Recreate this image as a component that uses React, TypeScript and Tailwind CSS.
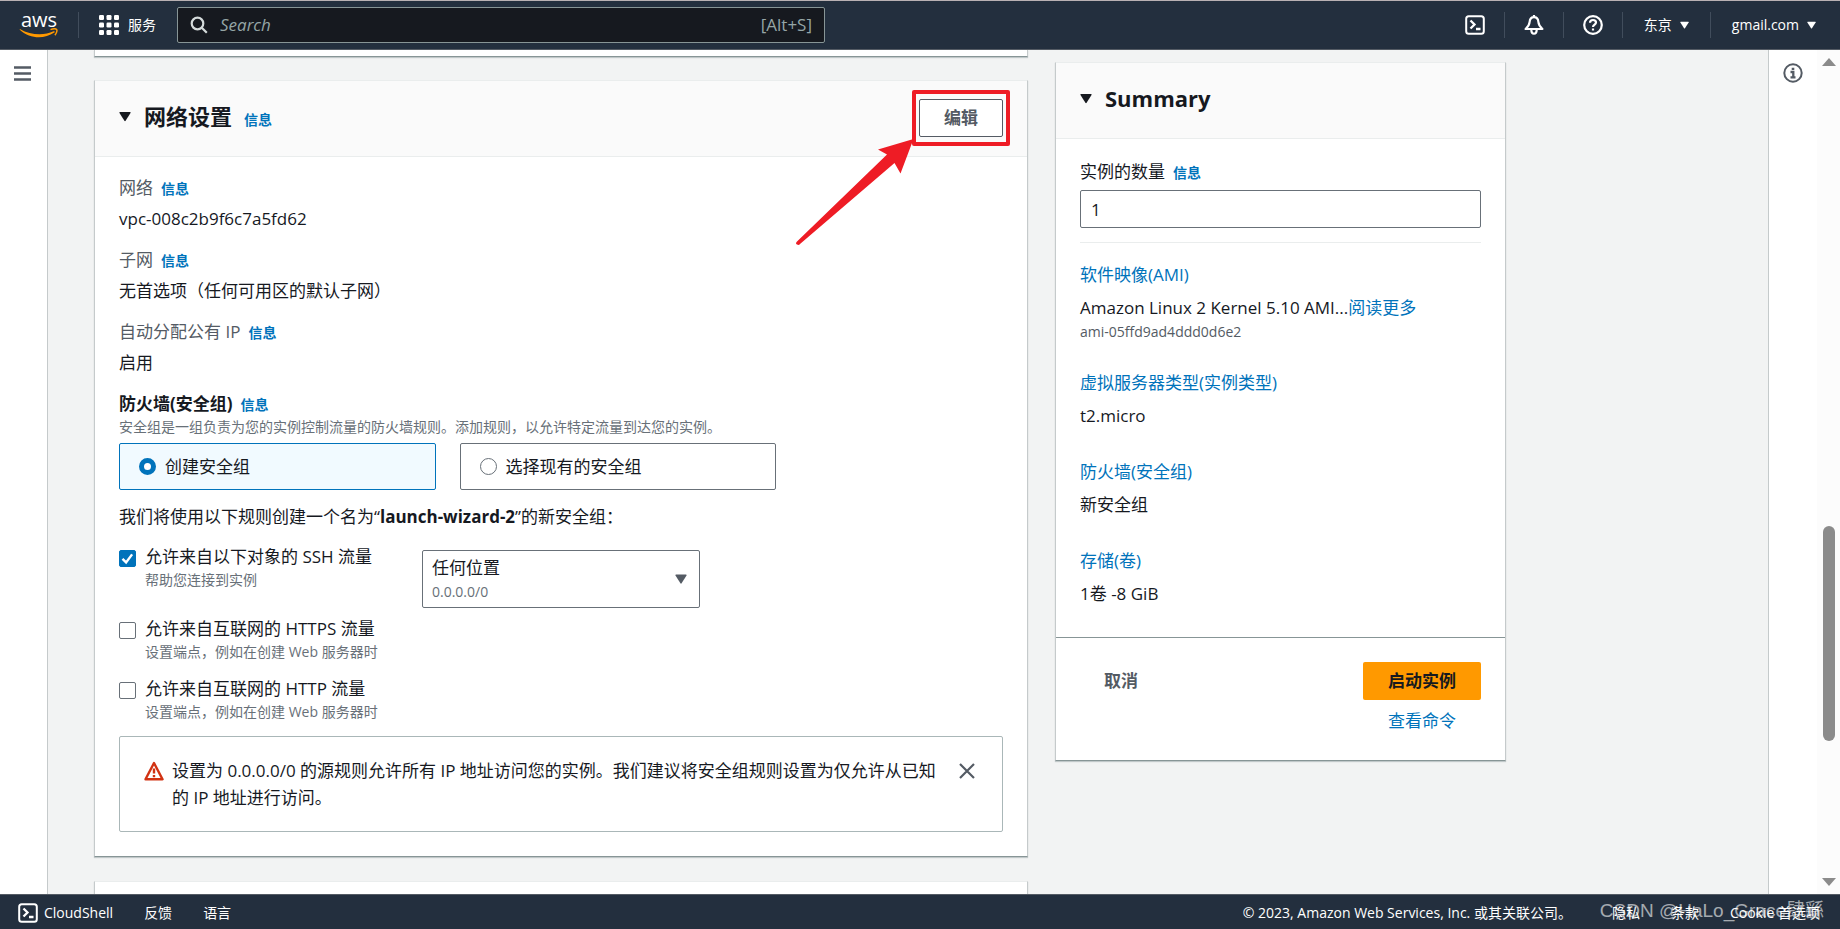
import { useState } from 'react';
import type { ReactNode } from 'react';

const NETWORK_FIELDS = [
  { label: '网络', value: 'vpc-008c2b9f6c7a5fd62' },
  { label: '子网', value: '无首选项（任何可用区的默认子网）' },
  { label: '自动分配公有 IP', value: '启用' },
];

const SUMMARY_FIELDS = [
  { label: '虚拟服务器类型(实例类型)', value: 't2.micro' },
  { label: '防火墙(安全组)', value: '新安全组' },
  { label: '存储(卷)', value: '1卷 -8 GiB' },
];

const GROUP_MODES = [
  { id: 'create', label: '创建安全组' },
  { id: 'existing', label: '选择现有的安全组' },
];

function InfoLink() {
  return (
    <a href="#info" className="ml-2 text-sm font-bold text-[#0073bb]">
      信息
    </a>
  );
}

function Caret({ className }: { className: string }) {
  return (
    <svg viewBox="0 0 12 10" className={className} fill="currentColor" aria-hidden="true">
      <path d="M1 .5h10q1 0 .5 1L6.6 9.3q-.6.8-1.2 0L.5 1.5Q0 .5 1 .5z" />
    </svg>
  );
}

function ShellIcon() {
  return (
    <svg viewBox="0 0 20 20" className="h-5 w-5 shrink-0" fill="none" stroke="currentColor" strokeWidth="2" aria-hidden="true">
      <rect x="1.2" y="1.2" width="17.6" height="17.6" rx="2.5" />
      <path d="M5.5 5.500 9.500 9.500 5.500 13.500M11 14h4.500" strokeWidth="2.300" />
    </svg>
  );
}

function AwsLogo() {
  return (
    <a href="#home" aria-label="aws" className="flex w-10 flex-col items-center text-white">
      <span className="text-xl leading-4 font-medium">aws</span>
      <svg viewBox="0 0 40 10" className="h-[10px] w-10" aria-hidden="true">
        <path d="M1.300 1.200C11 7 25 8 34.500 3.300c1.200-.4 1.800.6.800 1.300C25 11.500 11 11 1 2c-.5-.6-.2-1.100.3-.8z" fill="#ff9900" />
        <path d="M31.500 1.600c2.500-.9 5.500-.9 6.200 0 .700 1-.3 3.900-1.800 5.600" fill="none" stroke="#ff9900" strokeWidth="1.500" />
      </svg>
    </a>
  );
}

function Divider() {
  return <span className="h-[26px] w-px bg-[#414d5c]" />;
}

function TopBar() {
  return (
    <header className="flex h-[50px] shrink-0 items-center border-t border-b border-t-[#b9b1b3] border-b-[#545b64] bg-[#232f3e] pr-[22px] pl-[19px] text-sm text-white">
      <AwsLogo />
      <span className="ml-[19px]">
        <span className="block h-[26px] w-px bg-[#414d5c]" />
      </span>
      <button type="button" className="ml-5 flex items-center gap-[9px]">
        <svg viewBox="0 0 20 20" className="h-5 w-5" fill="currentColor" aria-hidden="true">
          {[0, 7.5, 15].map((y) =>
            [0, 7.5, 15].map((x) => <rect key={`${x}-${y}`} x={x} y={y} width="5" height="5" rx="1.2" />)
          )}
        </svg>
        服务
      </button>
      <label className="ml-[21px] flex h-9 w-full max-w-[648px] items-center rounded-xs border border-[#879596] bg-[#16191f] px-3 text-[17px] text-[#95a5a6]">
        <svg viewBox="0 0 18 18" className="h-[18px] w-[18px] shrink-0" fill="none" stroke="#d5dbdb" strokeWidth="2.200" aria-hidden="true">
          <circle cx="7.500" cy="7.500" r="5.800" />
          <path d="m11.800 11.800 5 5" />
        </svg>
        <input
          type="search"
          aria-label="Search"
          placeholder="Search"
          className="ml-3 min-w-0 flex-1 bg-transparent outline-none placeholder:text-[#95a5a6] placeholder:italic"
        />
        <span>[Alt+S]</span>
      </label>

      <div className="ml-auto flex items-center gap-[19px] pl-5">
        <button type="button" aria-label="CloudShell">
          <ShellIcon />
        </button>
        <Divider />
        <button type="button" aria-label="通知">
          <svg viewBox="0 0 20 20" className="h-5 w-5" fill="none" stroke="currentColor" strokeWidth="2.200" strokeLinejoin="round" aria-hidden="true">
            <path d="M10 2.200C7 2.200 5.800 4.500 5.600 7c-.2 3-1.600 4.800-4 7h16.800c-2.400-2.200-3.800-4-4-7C14.200 4.500 13 2.200 10 2.200zM10 0v2M7.300 14.500c0 2.500 1 4.200 2.700 4.200s2.700-1.700 2.700-4.200" />
          </svg>
        </button>
        <Divider />
        <button type="button" aria-label="帮助">
          <svg viewBox="0 0 20 20" className="h-5 w-5" fill="none" stroke="currentColor" strokeWidth="2.200" aria-hidden="true">
            <circle cx="10" cy="10" r="8.800" />
            <path d="M7 7.800C7 6 8.300 5 10 5s3 1 3 2.600c0 2-3 2-3 4.400M10 13.400v2" />
          </svg>
        </button>
        <Divider />
        <button type="button" className="flex items-center gap-2 px-0.5">
          东京
          <Caret className="h-2 w-[9px]" />
        </button>
        <Divider />
        <button type="button" className="flex items-center gap-2 px-0.5">
          gmail.com
          <Caret className="h-2 w-[9px]" />
        </button>
      </div>
    </header>
  );
}

function Card({ children, className = '' }: { children?: ReactNode; className?: string }) {
  return (
    <section
      className={`border border-x-[#c5cacb] border-t-[#eaeded] border-b-[#879596] bg-white shadow-[0_1px_1px_rgba(0,28,36,0.2)] ${className}`}
    >
      {children}
    </section>
  );
}

function CardHeader({ title, children }: { title: string; children?: ReactNode }) {
  return (
    <div className="flex h-[76px] justify-between border-b border-[#eaeded] bg-[#fafafa] px-6 pt-4">
      <h2 className="flex h-[38px] items-center text-[22px] font-bold">
        <Caret className="mr-[13px] h-[11px] w-3" />
        {title}
        {children}
      </h2>
    </div>
  );
}

function Radio({ checked }: { checked: boolean }) {
  return checked
    ? <span className="h-[17px] w-[17px] rounded-full border-[5px] border-[#0073bb] bg-white" />
    : <span className="h-[17px] w-[17px] rounded-full border border-[#687078] bg-white" />;
}

function TrafficRule({ id, label, hint, defaultChecked }: { id: string; label: string; hint: string; defaultChecked?: boolean }) {
  return (
    <div className="flex gap-[9px]">
      <span className="relative mt-[6px] h-[17px] w-[17px] shrink-0">
        <input
          id={id}
          type="checkbox"
          defaultChecked={defaultChecked}
          className="peer block h-[17px] w-[17px] appearance-none rounded-xs border border-[#687078] bg-white checked:border-[#0073bb] checked:bg-[#0073bb]"
        />
        <svg viewBox="0 0 17 17" className="pointer-events-none absolute inset-0 hidden peer-checked:block" fill="none" stroke="#fff" strokeWidth="2.400" aria-hidden="true">
          <path d="m3.500 8.800 3.600 3.600 6-8" />
        </svg>
      </span>
      <div>
        <label htmlFor={id} className="block leading-[26px]">
          {label}
        </label>
        <p className="text-sm leading-5 text-[#687078]">{hint}</p>
      </div>
    </div>
  );
}

// Red box and arrow drawn over the edit button
function EditCallout() {
  return (
    <>
      <span className="pointer-events-none absolute -inset-x-[7px] -inset-y-[9px] rounded-xs border-4 border-[#ee1c25]" />
      <svg viewBox="0 0 118 108" className="pointer-events-none absolute top-[39px] right-[89px] h-[108px] w-[118px]" fill="#ee1c25" aria-hidden="true">
        <path d="M117.500 1 82 11.500l9 5L1 103.500q-2 2 0 3t3-.5L98.500 25l6 10.500z" />
      </svg>
    </>
  );
}

function NetworkPanel() {
  const [mode, setMode] = useState('create');
  const [warning, setWarning] = useState(true);

  return (
    <Card className="mt-[23px]">
      <div className="relative">
        <CardHeader title="网络设置">
          <span className="ml-1 font-normal">
            <InfoLink />
          </span>
        </CardHeader>
        <div className="absolute top-[18px] right-6">
          <button type="button" className="h-[38px] w-[84px] rounded-xs border border-[#545b64] bg-white font-bold text-[#545b64]">
            编辑
          </button>
          <EditCallout />
        </div>
      </div>

      <div className="px-6 pt-[18px] pb-6">
        <dl className="flex flex-col gap-[15px]">
          {NETWORK_FIELDS.map((f) => (
            <div key={f.label} className="flex flex-col gap-[5px] leading-[26px]">
              <dt className="text-[#545b64]">
                {f.label}
                <InfoLink />
              </dt>
              <dd>{f.value}</dd>
            </div>
          ))}
        </dl>

        <fieldset className="mt-[15px]">
          <legend className="leading-[26px] font-bold">
            防火墙(安全组)
            <InfoLink />
          </legend>
          <p className="text-sm leading-5 text-[#687078]">
            安全组是一组负责为您的实例控制流量的防火墙规则。添加规则，以允许特定流量到达您的实例。
          </p>
          <div className="mt-[6px] grid max-w-[657px] grid-cols-2 gap-6">
            {GROUP_MODES.map((m) => (
              <label
                key={m.id}
                className={
                  m.id === mode
                    ? 'flex h-[47px] items-center gap-[9px] rounded-xs border border-[#0073bb] bg-[#f1faff] px-[19px]'
                    : 'flex h-[47px] items-center gap-[9px] rounded-xs border border-[#687078] bg-white px-[19px]'
                }
              >
                <input type="radio" name="group-mode" className="sr-only" checked={m.id === mode} onChange={() => setMode(m.id)} />
                <Radio checked={m.id === mode} />
                {m.label}
              </label>
            ))}
          </div>
        </fieldset>

        <p className="mt-[14px] leading-[26px]">
          我们将使用以下规则创建一个名为“<b>launch-wizard-2</b>”的新安全组：
        </p>

        <div className="mt-[14px] flex">
          <div className="w-[303px]">
            <TrafficRule id="ssh" label="允许来自以下对象的 SSH 流量" hint="帮助您连接到实例" defaultChecked />
          </div>
          <div className="relative mt-[6px] h-[58px] w-[278px]">
            <select
              aria-label="源类型"
              className="h-full w-full appearance-none rounded-xs border border-[#687078] bg-white pr-8 pb-[22px] pl-[9px]"
            >
              <option>任何位置</option>
            </select>
            <span className="pointer-events-none absolute bottom-[6px] left-[10px] text-sm leading-5 text-[#687078]">0.0.0.0/0</span>
            <Caret className="pointer-events-none absolute top-6 right-[13px] h-[10px] w-3 text-[#545b64]" />
          </div>
        </div>
        <div className="mt-2 flex flex-col gap-[14px]">
          <TrafficRule id="https" label="允许来自互联网的 HTTPS 流量" hint="设置端点，例如在创建 Web 服务器时" />
          <TrafficRule id="http" label="允许来自互联网的 HTTP 流量" hint="设置端点，例如在创建 Web 服务器时" />
        </div>

        {warning && (
          <div role="alert" className="mt-[14px] flex rounded-xs border border-[#aab7b8] py-5 pr-[27px] pl-6">
            <svg viewBox="0 0 20 20" className="mt-1 h-5 w-5 shrink-0" fill="none" stroke="#d13212" strokeWidth="2.400" strokeLinejoin="round" aria-hidden="true">
              <path d="M10 2 18.500 18.300h-17zM10 7.500v5M10 14v2.200" />
            </svg>
            <p className="ml-2 flex-1 leading-[27px]">
              设置为 0.0.0.0/0 的源规则允许所有 IP 地址访问您的实例。我们建议将安全组规则设置为仅允许从已知的 IP 地址进行访问。
            </p>
            <button type="button" aria-label="关闭" onClick={() => setWarning(false)} className="mt-[6px] ml-4 h-4 w-4 shrink-0 text-[#545b64]">
              <svg viewBox="0 0 16 16" fill="none" stroke="currentColor" strokeWidth="2.200" aria-hidden="true">
                <path d="m1 1 14 14M15 1 1 15" />
              </svg>
            </button>
          </div>
        )}
      </div>
    </Card>
  );
}

function SummaryPanel() {
  return (
    <Card>
      <CardHeader title="Summary" />
      <div className="px-6 pt-5">
        <label htmlFor="count" className="leading-[26px]">
          实例的数量
        </label>
        <InfoLink />
        <input
          id="count"
          type="text"
          defaultValue="1"
          className="mt-[5px] block h-[38px] w-full rounded-xs border border-[#687078] bg-white px-[10px]"
        />
        <hr className="mt-[14px] border-[#eaeded]" />

        <div className="mt-[19px] leading-[26px]">
          <a href="#ami" className="text-[#0073bb]">软件映像(AMI)</a>
          <p className="mt-[7px]">
            Amazon Linux 2 Kernel 5.10 AMI...<a href="#more" className="text-[#0073bb]">阅读更多</a>
          </p>
          <p className="text-sm leading-[22px] text-[#545b64]">ami-05ffd9ad4ddd0d6e2</p>
        </div>
        <div className="mt-[27px] flex flex-col gap-[30px] pb-[30px] leading-[26px]">
          {SUMMARY_FIELDS.map((f) => (
            <div key={f.label}>
              <a href="#field" className="text-[#0073bb]">{f.label}</a>
              <p className="mt-[7px]">{f.value}</p>
            </div>
          ))}
        </div>
      </div>
      <div className="flex items-start justify-between border-t border-[#879596] px-6 pt-6 pb-[26px]">
        <button type="button" className="h-[38px] px-6 font-bold text-[#545b64]">取消</button>
        <div className="flex flex-col items-center">
          <button type="button" className="h-[38px] rounded-xs bg-[#ff9900] px-[25px] font-bold">启动实例</button>
          <a href="#commands" className="mt-2 leading-[26px] text-[#0073bb]">查看命令</a>
        </div>
      </div>
    </Card>
  );
}

function BottomBar() {
  return (
    <footer className="relative flex h-[35px] shrink-0 items-center border-t border-[#545b64] bg-[#232f3e] pt-px pr-5 pl-[18px] text-sm text-white">
      <button type="button" className="flex items-center gap-[6px]">
        <ShellIcon />
        CloudShell
      </button>
      <a href="#feedback" className="ml-[31px]">反馈</a>
      <a href="#language" className="ml-[31px]">语言</a>
      <span className="ml-auto">© 2023, Amazon Web Services, Inc. 或其关联公司。</span>
      <a href="#privacy" className="ml-10">隐私</a>
      <a href="#terms" className="ml-[31px]">条款</a>
      <a href="#cookie" className="ml-[31px]">Cookie 首选项</a>
      <span className="pointer-events-none absolute right-4 bottom-1 font-['Liberation_Sans','Noto_Sans_CJK_SC',sans-serif] text-[19px] leading-7 text-white/60">
        CSDN @HaLo_Grace肆繇
      </span>
    </footer>
  );
}

export default function App() {
  return (
    <div className="flex h-screen flex-col overflow-hidden bg-[#f2f3f3] font-['Open_Sans','Noto_Sans_CJK_SC',sans-serif] text-[17px] text-[#16191f]">
      <TopBar />
      <div className="flex min-h-0 flex-1">
        <nav className="w-12 shrink-0 border-r border-[#c5cacb] bg-white pt-4 pl-[14px]">
          <button type="button" aria-label="菜单" className="block text-[#545b64]">
            <svg viewBox="0 0 17 15" className="h-[15px] w-[17px]" stroke="currentColor" strokeWidth="2.400" aria-hidden="true">
              <path d="M0 1.500h17M0 7.500h17M0 13.500h17" />
            </svg>
          </button>
        </nav>

        <main className="min-w-0 flex-1 overflow-hidden pr-6 pl-[46px]">
          <div className="flex max-w-[1412px] items-start gap-[27px]">
            <div className="min-w-0 flex-1">
              <Card className="h-[7px] border-t-0" />
              <NetworkPanel />
              <Card className="mt-6 h-20 bg-[#fafafa]" />
            </div>
            <aside className="mt-3 w-[451px] shrink-0">
              <SummaryPanel />
            </aside>
          </div>
        </main>

        <aside className="flex w-[72px] shrink-0 border-l border-[#c5cacb] bg-white">
          <button type="button" aria-label="信息面板" className="mt-[13px] ml-[14px] h-5 w-5 text-[#545b64]">
            <svg viewBox="0 0 20 20" fill="none" stroke="currentColor" strokeWidth="2" aria-hidden="true">
              <circle cx="10" cy="10" r="8.700" />
              <path d="M8.700 5.800h2.600M7.500 9h2.800v5.300M7.500 14.300h5" strokeWidth="2.300" />
            </svg>
          </button>
          <div className="ml-auto flex w-[23px] flex-col items-center bg-[#fcfcfc] py-2 text-[#8b8b8b]">
            <svg viewBox="0 0 14 8" className="h-2 w-[14px]" fill="currentColor" aria-hidden="true">
              <path d="M7 0l7 8H0z" />
            </svg>
            <div className="flex flex-1 flex-col">
              <span className="flex-[461]" />
              <span className="w-3 flex-[215] rounded-full bg-[#8b8b8b]" />
              <span className="flex-[137]" />
            </div>
            <svg viewBox="0 0 14 8" className="h-2 w-[14px]" fill="currentColor" aria-hidden="true">
              <path d="M0 0h14L7 8z" />
            </svg>
          </div>
        </aside>
      </div>
      <BottomBar />
    </div>
  );
}
